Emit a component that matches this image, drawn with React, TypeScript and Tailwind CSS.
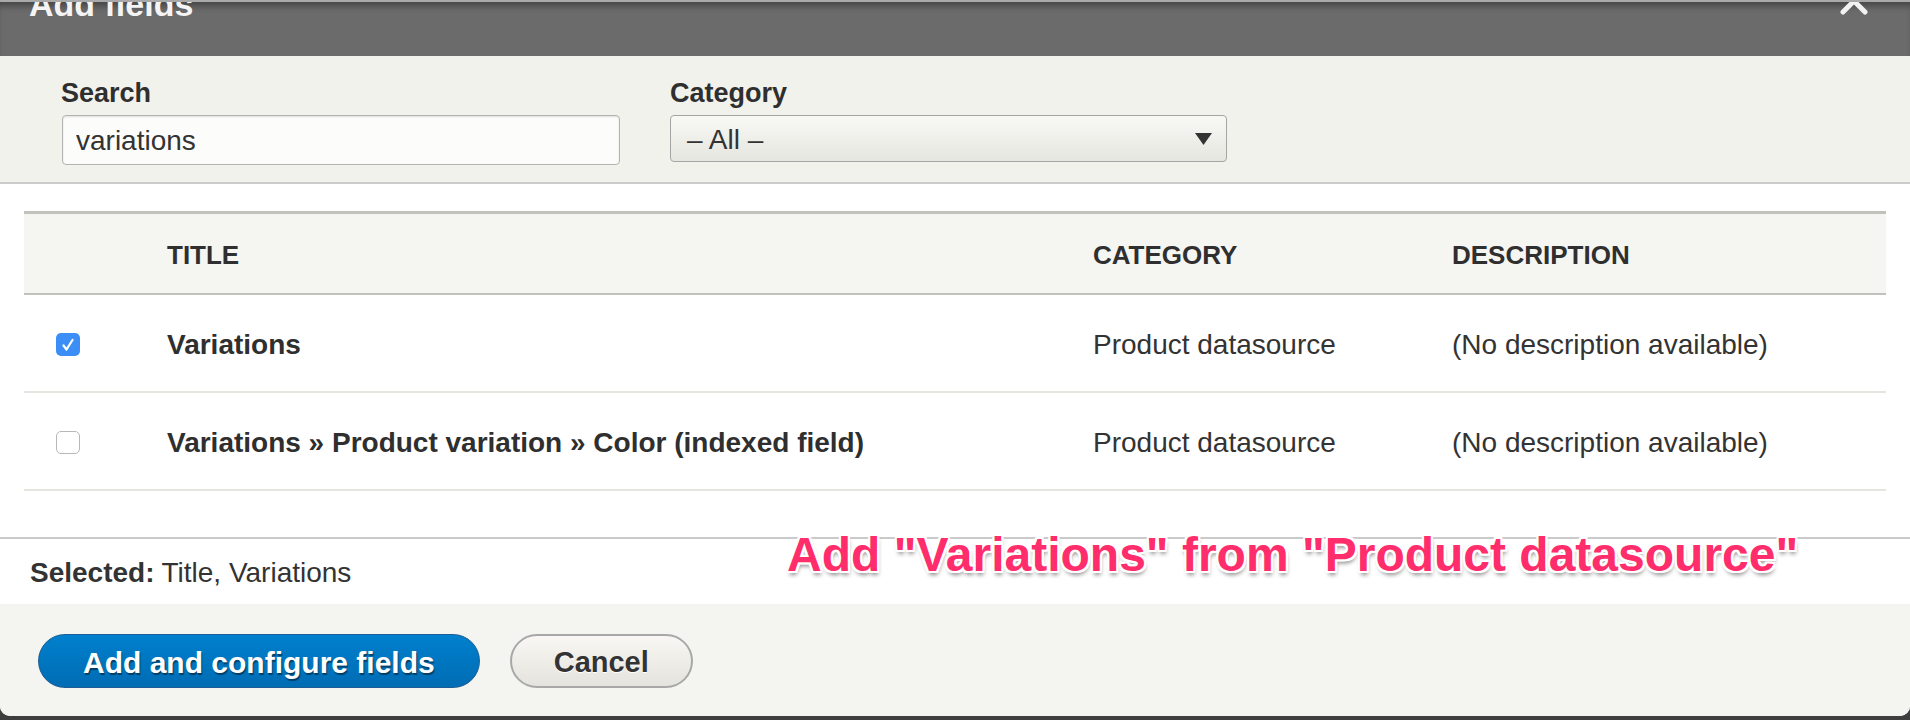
import { useState } from "react"

interface FieldRow {
  id: number
  title: string
  category: string
  description: string
}

const rows: FieldRow[] = [
  { id: 1, title: "Variations", category: "Product datasource", description: "(No description available)" },
  {
    id: 2,
    title: "Variations » Product variation » Color (indexed field)",
    category: "Product datasource",
    description: "(No description available)",
  },
]

export default function App() {
  const [checked, setChecked] = useState<number[]>([1])

  const toggle = (id: number) =>
    setChecked((prev) => (prev.includes(id) ? prev.filter((x) => x !== id) : [...prev, id]))

  return (
    <div className="min-h-screen bg-[#3e3e3e] font-['Liberation_Sans',Arial,sans-serif] text-[#333]">
      {/* Dialog */}
      <div className="relative w-full overflow-hidden rounded-b-[10px] bg-white">
        <div className="h-[2px] bg-[#a9a9a9]" />

        {/* Title bar */}
        <div className="relative h-[54px] overflow-hidden bg-[#6b6b6b] shadow-[inset_0_7px_6px_-3px_rgba(0,0,0,0.35)]">
          <h1 className="-mt-[15px] pl-[29px] text-[34px] leading-[34px] font-bold text-[#f4f4f4]">Add fields</h1>
          <svg className="absolute left-[1838px] top-[-17px] h-[32px] w-[32px]" viewBox="0 0 32 32">
            <path d="M5 5 L27 27 M27 5 L5 27" stroke="#f2f2f2" strokeWidth="5" strokeLinecap="round" fill="none" />
          </svg>
        </div>

        {/* Filters */}
        <div className="flex h-[128px] items-start gap-[50px] border-b-2 border-[#cbcbcb] bg-[#f2f2ed] pl-[61px] pt-[21px]">
          <div className="flex flex-col">
            <label className="mb-[6px] text-[27px] leading-[32px] font-bold text-[#2f2f2f]">Search</label>
            <input
              readOnly
              defaultValue="variations"
              className="ml-px h-[50px] w-[558px] rounded-[4px] border border-[#b3b3b3] bg-[#fcfcfa] pl-[13px] pt-[2px] text-[28px] text-[#333] shadow-[inset_0_1px_2px_rgba(0,0,0,0.12)] outline-none"
            />
          </div>
          <div className="flex flex-col">
            <label className="mb-[6px] text-[27px] leading-[32px] font-bold text-[#2f2f2f]">Category</label>
            <div className="flex h-[47px] w-[557px] items-center justify-between rounded-[4px] border border-[#a5a5a5] bg-gradient-to-b from-[#f8f8f5] to-[#e6e6e0] pl-[16px] pr-[14px]">
              <span className="pt-[2px] text-[28px] text-[#333]">– All –</span>
              <svg className="h-[12px] w-[17px]" viewBox="0 0 17 12">
                <path d="M0 0 H17 L8.5 12 Z" fill="#333" />
              </svg>
            </div>
          </div>
        </div>

        {/* Table */}
        <div className="mx-[24px] pb-[46px] pt-[27px]">
          <div className="grid h-[84px] grid-cols-[143px_926px_359px_1fr] items-center border-b-2 border-t-[3px] border-[#c2c2bd] bg-[#f5f5f2] pt-[3px] text-[26px] font-bold text-[#2f2f2f]">
            <div />
            <div>TITLE</div>
            <div>CATEGORY</div>
            <div>DESCRIPTION</div>
          </div>
          {rows.map((row) => {
            const isChecked = checked.includes(row.id)
            return (
              <div
                key={row.id}
                className="grid h-[98px] grid-cols-[143px_926px_359px_1fr] items-center border-b-2 border-[#e6e6e1] pt-[3px] text-[28px]"
              >
                <div className="pl-[32px]">
                  <button
                    onClick={() => toggle(row.id)}
                    className={`flex h-[23px] w-[24px] items-center justify-center rounded-[5px] ${
                      isChecked ? "bg-[#3b8ef6]" : "border border-[#b8b8b8] bg-white"
                    }`}
                  >
                    {isChecked && (
                      <svg className="h-[18px] w-[18px]" viewBox="0 0 18 18">
                        <path d="M4.5 9.5 L7.5 13.5 L13.5 4" stroke="#fff" strokeWidth="2.2" fill="none" strokeLinecap="round" strokeLinejoin="round" />
                      </svg>
                    )}
                  </button>
                </div>
                <div className="font-bold text-[#2f2f2f]">{row.title}</div>
                <div>{row.category}</div>
                <div>{row.description}</div>
              </div>
            )
          })}
        </div>

        {/* Selected summary */}
        <div className="flex h-[67px] items-center border-t-2 border-[#cacaca] pl-[30px] pt-[2px] text-[28px]">
          <span className="font-bold">Selected:</span>
          <span className="ml-[7px]">Title, Variations</span>
        </div>

        {/* Actions */}
        <div className="flex h-[112px] items-start gap-[30px] bg-[#f4f4f0] pl-[38px] pt-[30px]">
          <button className="h-[54px] rounded-full border border-[#1c5d95] bg-gradient-to-b from-[#0080cd] to-[#006cb4] px-[44px] pt-[2px] text-[30px] font-bold text-white [text-shadow:1px_2px_1px_rgba(0,0,0,0.45)]">
            Add and configure fields
          </button>
          <button className="h-[54px] rounded-full border-2 border-[#a8a8a8] bg-gradient-to-b from-[#f8f7f3] to-[#e4e3dd] px-[42px] pt-[4px] text-[29px] font-bold text-[#333] [text-shadow:0_1px_0_#fff]">
            Cancel
          </button>
        </div>

        {/* Annotation */}
        <div className="absolute left-[787px] top-[531px] text-[48px] leading-[48px] font-bold whitespace-nowrap text-[#ff2d6b] [text-shadow:2px_0_0_#fff,-2px_0_0_#fff,0_2px_0_#fff,0_-2px_0_#fff,2px_2px_0_#fff,-2px_-2px_0_#fff,2px_-2px_0_#fff,-2px_2px_0_#fff,1px_4px_4px_rgba(0,0,0,0.45)]">
          Add "Variations" from "Product datasource"
        </div>
      </div>
    </div>
  )
}
